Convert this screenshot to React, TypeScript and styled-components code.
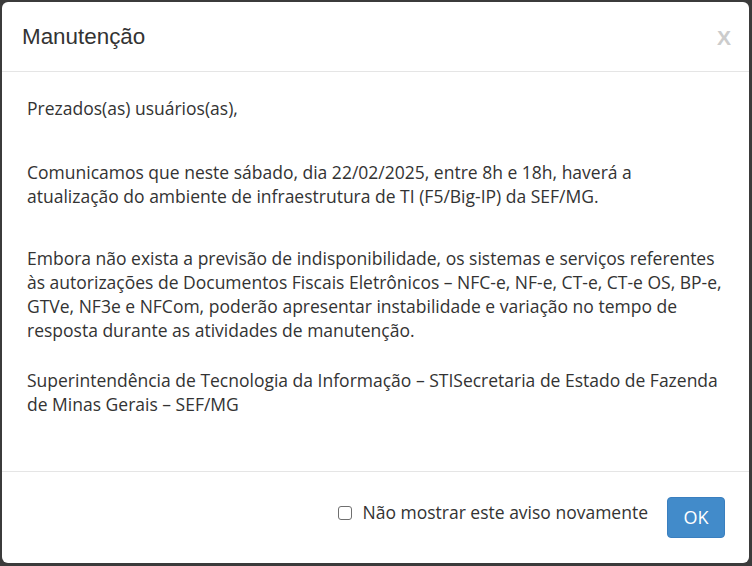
import React from "react";
import styled, { createGlobalStyle } from "styled-components";

const Global = createGlobalStyle`
  html, body { margin: 0; padding: 0; }
  body { background: #3b3b3b; width: 752px; height: 566px; overflow: hidden; }
`;

const Backdrop = styled.div`
  width: 752px;
  height: 566px;
  box-sizing: border-box;
  padding: 2px 3px 3px 2px;
  background: #3b3b3b;
`;

const Dialog = styled.div`
  height: 100%;
  background: #fff;
  border-radius: 6px;
  display: flex;
  flex-direction: column;
  overflow: hidden;
`;

const Header = styled.div`
  height: 69px;
  flex: none;
  display: flex;
  align-items: center;
  justify-content: space-between;
  padding: 0 18px 0 20px;
  border-bottom: 1px solid #e5e5e5;
`;

const Title = styled.h4`
  margin: 0;
  font-family: "Liberation Sans", Arial, sans-serif;
  font-weight: 400;
  font-size: 22.4px;
  color: #333;
`;

const Close = styled.button`
  border: 0;
  background: none;
  padding: 0;
  font-family: "Liberation Sans", Arial, sans-serif;
  font-weight: 700;
  font-size: 21px;
  line-height: 1;
  color: #cccccc;
  margin-top: 1px;
`;

const Body = styled.div`
  flex: 1;
  padding: 24px 25px 0 25px;
  font-family: "Open Sans", sans-serif;
  font-size: 17.5px;
  line-height: 24px;
  color: #333;
`;

const Para = styled.p<{ $gap: number }>`
  margin: 0 0 ${(p) => p.$gap}px;
`;

const Footer = styled.div`
  height: 90px;
  flex: none;
  border-top: 1px solid #e5e5e5;
  display: flex;
  align-items: center;
  justify-content: flex-end;
  padding: 0 24px 1px;
  gap: 19px;
`;

const Check = styled.label`
  display: flex;
  align-items: center;
  gap: 11px;
  margin-bottom: 11px;
  font-family: "Open Sans", sans-serif;
  font-size: 17.5px;
  color: #333;
`;

const Box = styled.span`
  width: 12px;
  height: 12px;
  border: 1px solid #6f6f6f;
  border-radius: 3px;
  background: #fff;
  margin-top: 2px;
`;

const OkButton = styled.button`
  width: 58px;
  height: 41px;
  border: 1px solid #3a7fbf;
  border-radius: 4px;
  background: #428bca;
  color: #fff;
  font-family: "Open Sans", sans-serif;
  font-size: 18px;
  padding: 0;
`;

export default function App() {
  return (
    <>
      <Global />
      <Backdrop>
        <Dialog>
          <Header>
            <Title>Manutenção</Title>
            <Close>X</Close>
          </Header>
          <Body>
            <Para $gap={40}>Prezados(as) usuários(as),</Para>
            <Para $gap={38}>
              Comunicamos que neste sábado, dia 22/02/2025, entre 8h e 18h, haverá a atualização do
              ambiente de infraestrutura de TI (F5/Big-IP) da SEF/MG.
            </Para>
            <Para $gap={26}>
              Embora não exista a previsão de indisponibilidade, os sistemas e serviços referentes às
              autorizações de Documentos Fiscais Eletrônicos – NFC-e, NF-e, CT-e, CT-e OS, BP-e,
              GTVe, NF3e e NFCom, poderão apresentar instabilidade e variação no tempo de resposta
              durante as atividades de manutenção.
            </Para>
            <Para $gap={0}>
              Superintendência de Tecnologia da Informação – STISecretaria de Estado de Fazenda de
              Minas Gerais – SEF/MG
            </Para>
          </Body>
          <Footer>
            <Check>
              <Box />
              Não mostrar este aviso novamente
            </Check>
            <OkButton>OK</OkButton>
          </Footer>
        </Dialog>
      </Backdrop>
    </>
  );
}
